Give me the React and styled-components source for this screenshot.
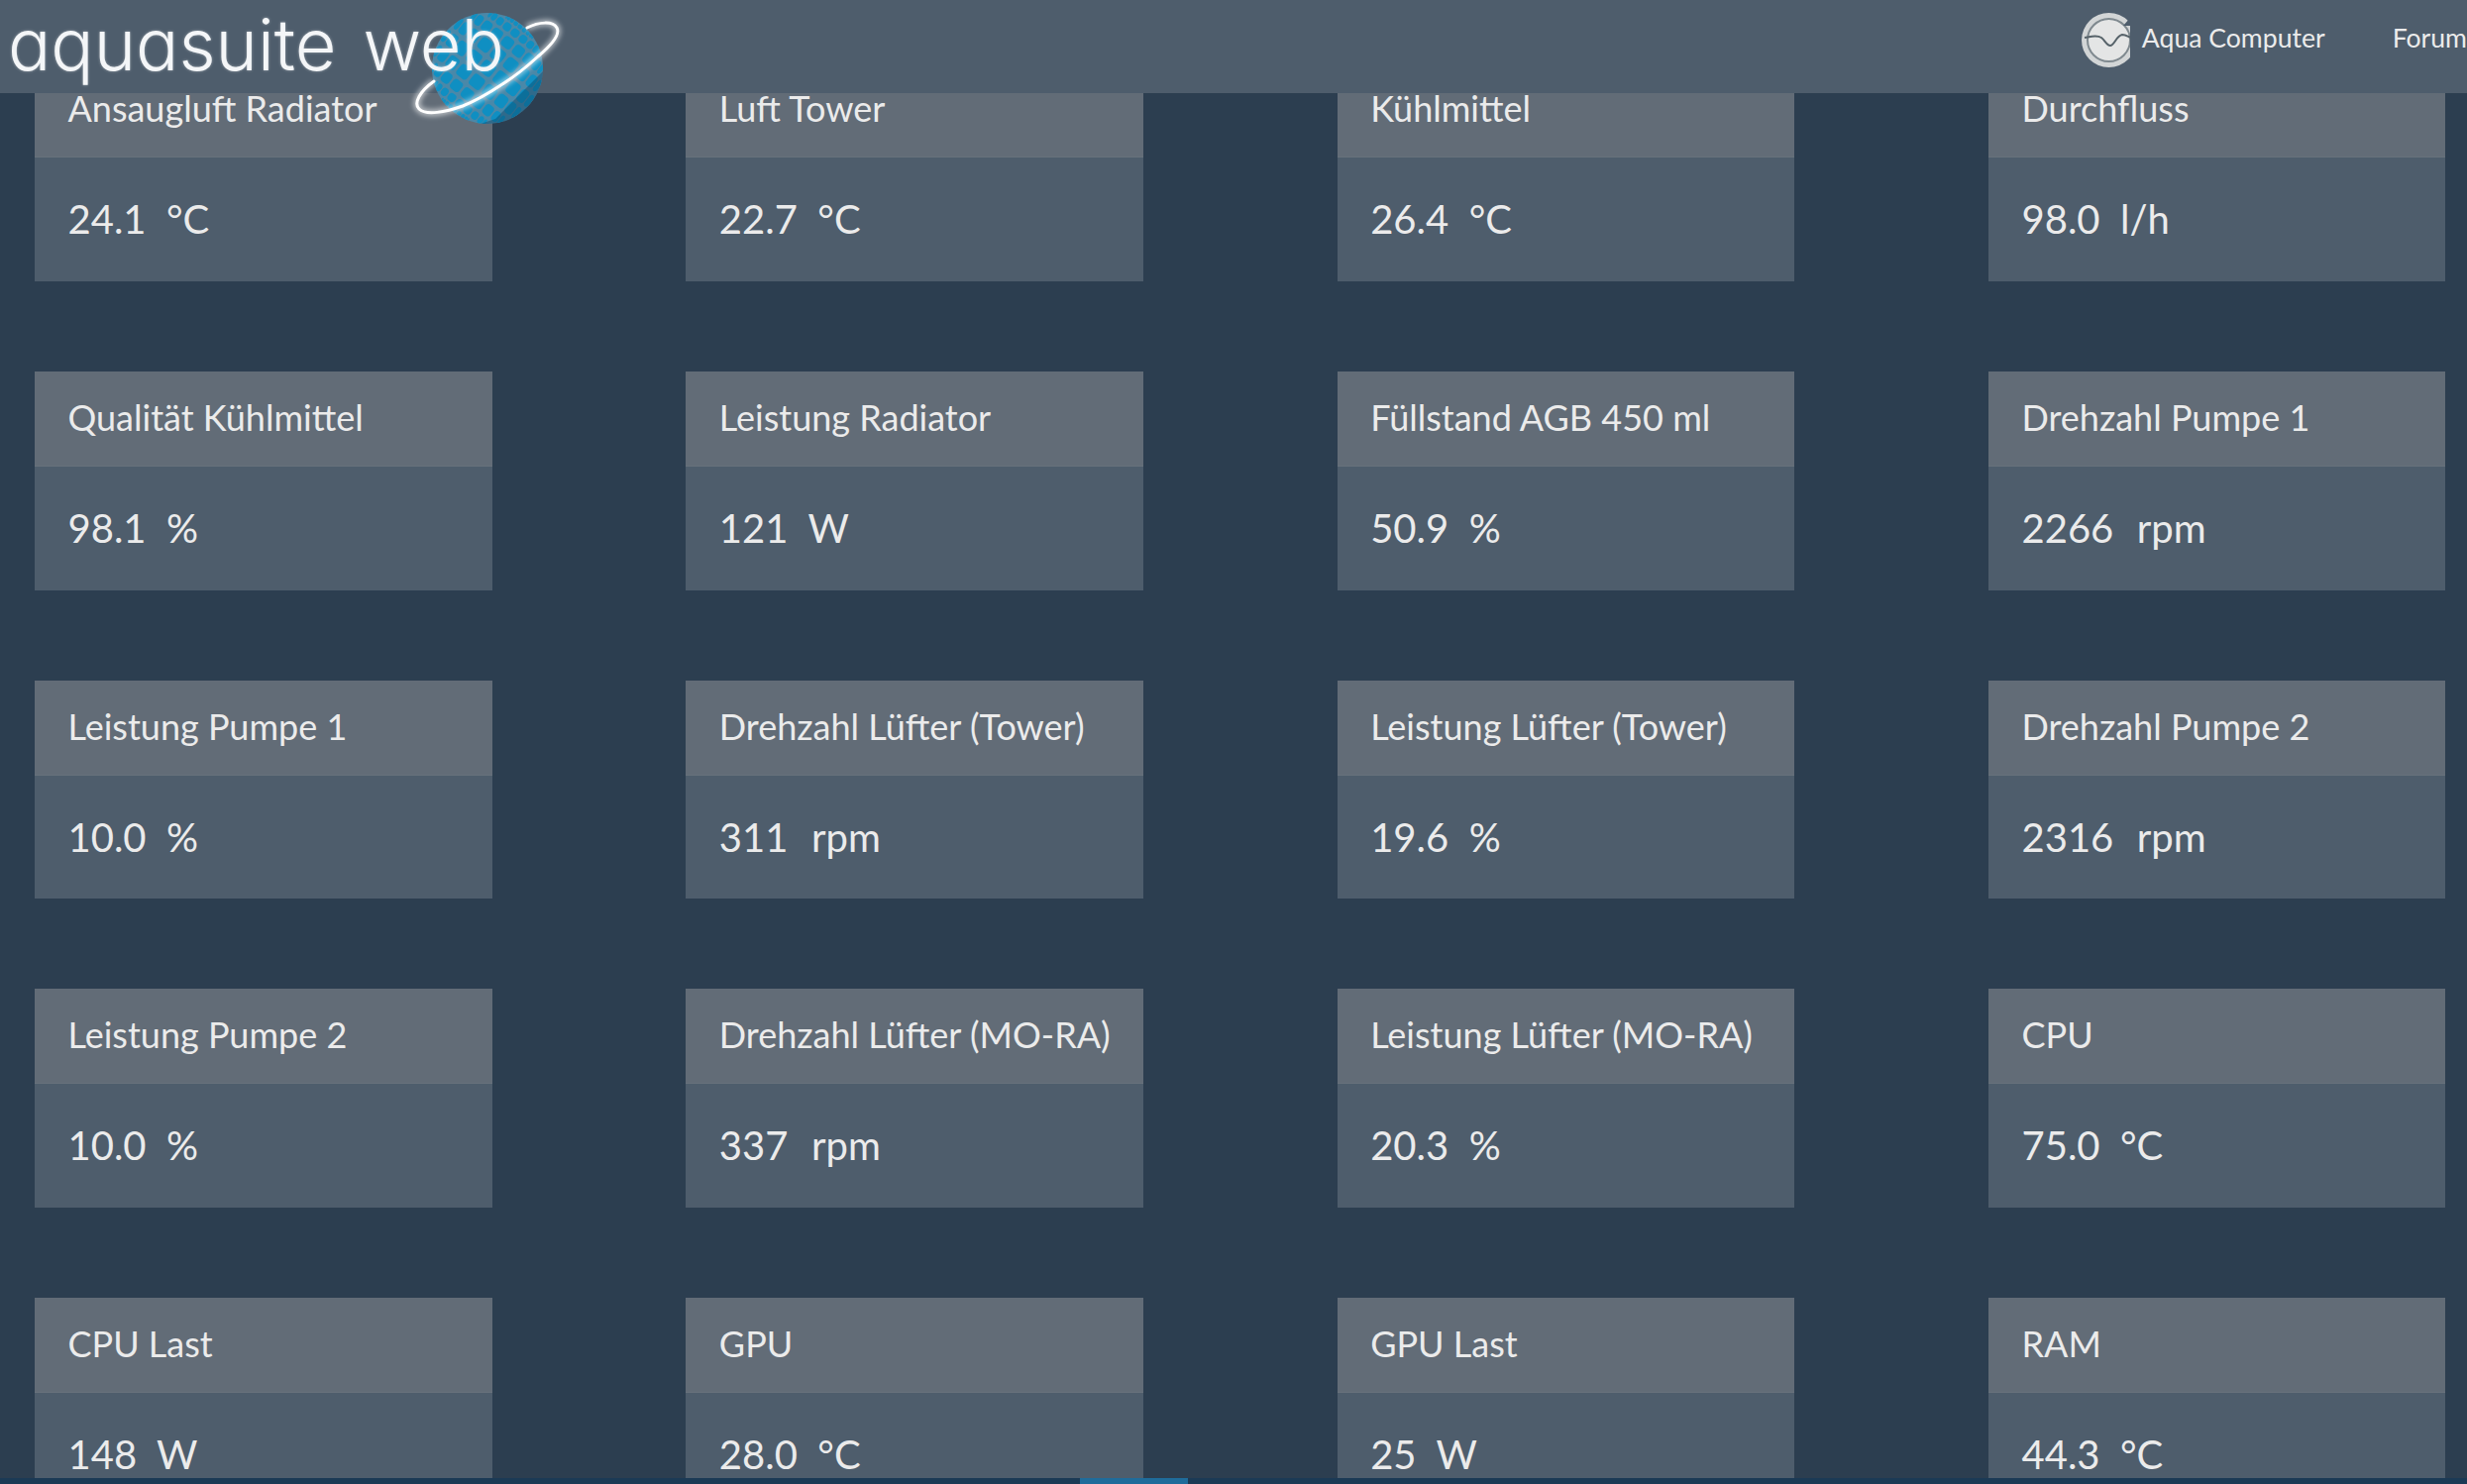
import React from 'react';
import styled, { createGlobalStyle } from 'styled-components';

const Global = createGlobalStyle`
  html, body { margin: 0; padding: 0; height: 100%; overflow: hidden; background: #2c3e50; }
`;
const Page = styled.div`
  position: relative; width: 2490px; height: 1498px; overflow: hidden;
  background: #2c3e50; color: #ebebeb; font-family: Lato, "Noto Sans", sans-serif;
`;
const Nav = styled.header`
  position: absolute; top: 0; left: 0; right: 0; height: 94px; background: #4e5d6c;
  display: flex; justify-content: space-between; align-items: flex-start;
`;
const Logo = styled.div`
  display: flex; gap: 27px; padding-left: 8px; height: 94px; align-items: flex-start;
`;
const LogoWord = styled.span`
  position: relative;
  font-family: Inter, sans-serif; font-feature-settings: "cv11"; font-weight: 300; font-size: 72px; line-height: 90px;
  color: #f4f6f8; white-space: pre; text-shadow: 0 0 3px rgba(255,255,255,.45);
`;
const LinkRow = styled.nav`
  display: flex; align-items: flex-start; padding-top: 13px; font-size: 26.6px;
`;
const NavLink = styled.a`
  display: flex; align-items: flex-start; gap: 11px; color: #ebebeb; line-height: 50px;
  margin-left: ${p => p.$gap}px; white-space: nowrap;
`;
const Globe = styled.svg`
  position: absolute; left: 410px; top: 0; width: 170px; height: 130px; overflow: visible;
`;
const Grid = styled.main`
  display: grid; grid-template-columns: repeat(4, 461.5px); column-gap: 195.83px; row-gap: 91px;
  padding: 63.33px 0 0 35px;
`;
const Card = styled.section`
  background: #4e5d6c; height: 220.67px;
`;
const CardTitle = styled.h3`
  margin: 0; height: 96px; box-sizing: border-box; background: #626c77; padding-left: 33.5px;
  border-bottom: 1px solid #67717b;
  font-size: 36px; font-weight: 400; line-height: 93px; white-space: nowrap; color: #ebebeb;
`;
const CardValue = styled.div`
  padding-left: 33.5px; font-size: 40px; line-height: 124px; white-space: pre; color: #ebebeb;
`;
const Unit = styled.span`
  margin-left: ${p => (p.$wide ? 3 : 0)}px;
`;
const ScrollTrack = styled.div`
  position: absolute; left: 0; right: 0; bottom: 0; height: 6px; background: #1b3a55;
`;
const ScrollThumb = styled.div`
  margin-left: 1090px; width: 109px; height: 100%; background: #1f6c9b;
`;

const data = [
  ['Ansaugluft Radiator','24.1','°C'],['Luft Tower','22.7','°C'],['Kühlmittel','26.4','°C'],['Durchfluss','98.0','l/h'],
  ['Qualität Kühlmittel','98.1','%'],['Leistung Radiator','121','W'],['Füllstand AGB 450 ml','50.9','%'],['Drehzahl Pumpe 1','2266','rpm'],
  ['Leistung Pumpe 1','10.0','%'],['Drehzahl Lüfter (Tower)','311','rpm'],['Leistung Lüfter (Tower)','19.6','%'],['Drehzahl Pumpe 2','2316','rpm'],
  ['Leistung Pumpe 2','10.0','%'],['Drehzahl Lüfter (MO-RA)','337','rpm'],['Leistung Lüfter (MO-RA)','20.3','%'],['CPU','75.0','°C'],
  ['CPU Last','148','W'],['GPU','28.0','°C'],['GPU Last','25','W'],['RAM','44.3','°C'],
];

const tiles = [];
for (let lat = -72; lat <= 72; lat += 18) {
  for (let lon = -72; lon <= 72; lon += 18) {
    const a = lat * Math.PI / 180, o = lon * Math.PI / 180;
    const x = 56 * Math.cos(a) * Math.sin(o), y = 56 * Math.sin(a);
    tiles.push({ x, y, w: 14 * Math.cos(o) * Math.cos(a) + 0.5, h: 13.5 * Math.cos(a) + 0.5 });
  }
}
const ring = 'M438 82 C424 92 417 104 423 110 C430 117 450 113 467 107 C482 101 495 93 507 85 C520 77 532 67 543 57 C556 46 566 35 562 28 C558 21 544 22 532 28';

const GlobeMark = () => (
  <Globe viewBox="410 0 170 130">
    <defs>
      <clipPath id="gc"><circle cx="492" cy="69" r="56" /></clipPath>
      <filter id="glow" x="-20%" y="-40%" width="140%" height="180%"><feGaussianBlur stdDeviation="2.5" /></filter>
    </defs>
    <circle cx="492" cy="69" r="56" fill="#4a88a8" />
    <g clipPath="url(#gc)">
      <g transform="rotate(38 492 69)">
        {tiles.map((t, i) => (
          <rect key={i} x={492 + t.x - t.w / 2} y={69 + t.y - t.h / 2} width={t.w} height={t.h} rx="3.5" fill="#0f8fc2" />
        ))}
      </g>
      <path d="M500 120 L560 60 L560 130 L470 130 Z" fill="#073f60" opacity=".4" />
    </g>
    <path d={ring} fill="none" stroke="#fff" strokeWidth="7" opacity=".55" filter="url(#glow)" />
    <path d={ring} fill="none" stroke="#fff" strokeWidth="3" strokeLinecap="round" />
  </Globe>
);

const AquaIcon = () => (
  <svg width="50" height="55" viewBox="0 0 50 55">
    <defs><clipPath id="ac"><rect x="0" y="0" width="49" height="55" /></clipPath></defs>
    <g clipPath="url(#ac)">
      <circle cx="27.5" cy="27.5" r="27.5" fill="#d2d5d6" />
      <circle cx="27.5" cy="27.5" r="21.5" fill="#e4e5e5" stroke="#7f898f" strokeWidth="2" />
      <path d="M3 25 C10 24 15 22 20 25 C24 28 25 33 29 33 C33 33 35 23 41 22 C45 22 47 24 50 25" fill="none" stroke="#566269" strokeWidth="2" />
      <path d="M49 5 L49 13 L42 13 Z" fill="#4e5d6c" />
    </g>
  </svg>
);

export default function App() {
  return (
    <Page>
      <Global />
      <Grid>
        {data.map(([t, v, u]) => (
          <Card key={t}>
            <CardTitle>{t}</CardTitle>
            <CardValue>{v}  <Unit $wide={u === 'rpm'}>{u}</Unit></CardValue>
          </Card>
        ))}
      </Grid>
      <Nav>
        <GlobeMark />
        <Logo><LogoWord>aquasuite</LogoWord><LogoWord>web</LogoWord></Logo>
        <LinkRow>
          <NavLink $gap={0}><AquaIcon />Aqua Computer</NavLink>
          <NavLink $gap={68}>Forum</NavLink>
        </LinkRow>
      </Nav>
      <ScrollTrack><ScrollThumb /></ScrollTrack>
    </Page>
  );
}
